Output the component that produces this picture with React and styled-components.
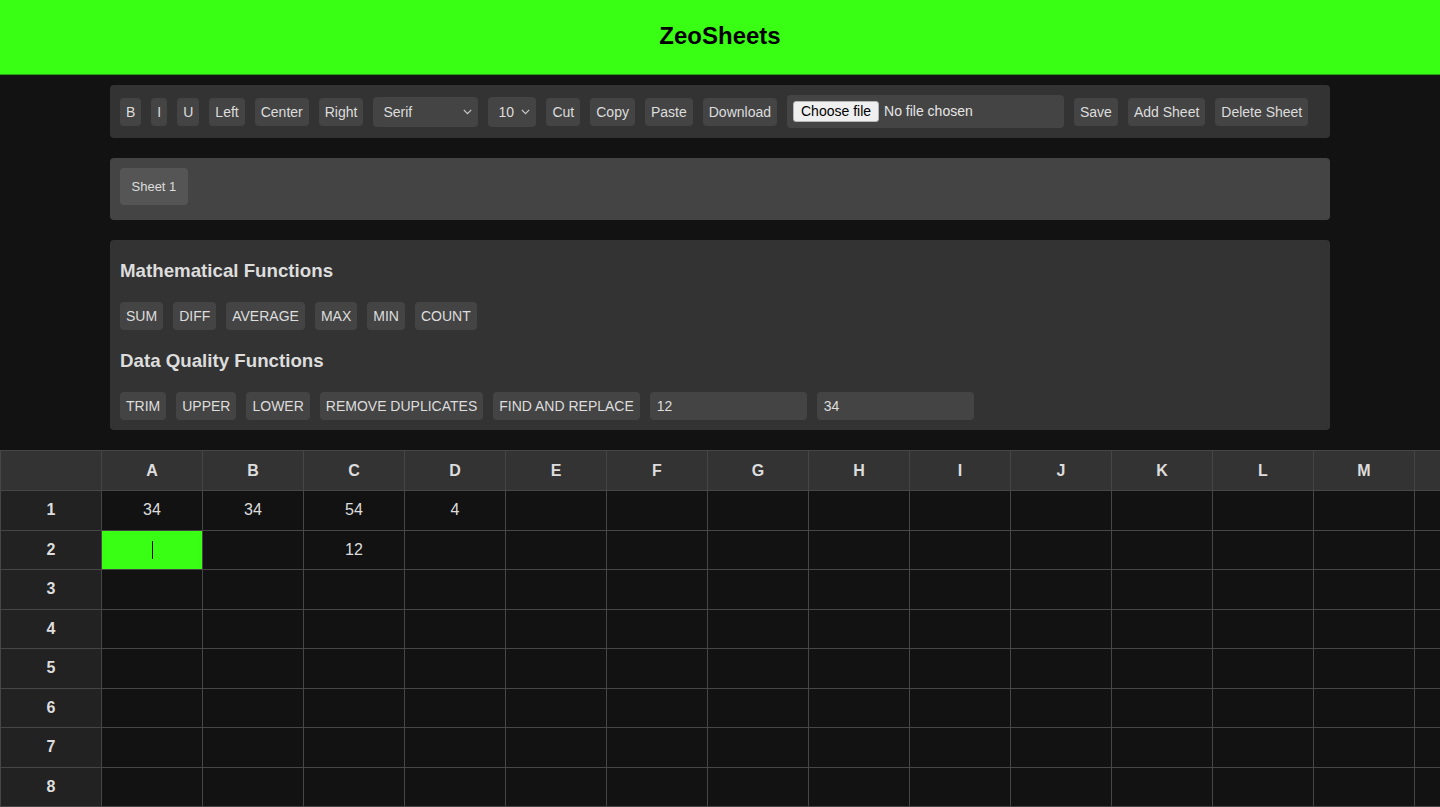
import React from 'react';
import styled, { createGlobalStyle } from 'styled-components';

const NEON = '#39ff14';
const FONT = '"Liberation Sans", Arial, Helvetica, sans-serif';

const GlobalStyle = createGlobalStyle`
  html, body {
    margin: 0;
    padding: 0;
    background: #121212;
    scrollbar-width: none;
  }
  body {
    font-family: ${FONT};
    color: #ddd;
    overflow-x: hidden;
  }
  ::-webkit-scrollbar { display: none; width: 0; height: 0; }
`;

/* header */
const Header = styled.header`
  height: 75px;
  padding-bottom: 3px;
  box-sizing: border-box;
  background: ${NEON};
  border-bottom: 1px solid #2ea317;
  display: flex;
  align-items: center;
  justify-content: center;
`;
const Title = styled.h1`
  margin: 0;
  font-size: 24px;
  font-weight: 700;
  color: #000;
`;

const Main = styled.main`
  width: 1220px;
  margin: 10px auto 20px;
  display: flex;
  flex-direction: column;
  gap: 20px;
`;

/* toolbar */
const Toolbar = styled.div`
  display: flex;
  align-items: center;
  gap: 10px;
  padding: 10px;
  background: #333;
  border-radius: 4px;
`;
const Btn = styled.button`
  font: 14px/16px ${FONT};
  color: #ddd;
  background: #444;
  border: none;
  border-radius: 4px;
  padding: 6px;
  white-space: nowrap;
  cursor: pointer;
`;
const SelectWrap = styled.div`
  position: relative;
  width: ${p => p.$w}px;
  height: 30px;
`;
const Select = styled.select`
  appearance: none;
  width: 100%;
  height: 100%;
  padding: 0 16px 0 10px;
  font: 14px ${FONT};
  color: #ddd;
  background: #444;
  border: none;
  border-radius: 4px;
  outline: none;
`;
const Chevron = styled.svg`
  position: absolute;
  right: 6px;
  top: 12px;
  pointer-events: none;
`;
const FileBox = styled.label`
  display: flex;
  align-items: center;
  gap: 5px;
  width: 277px;
  height: 33px;
  box-sizing: border-box;
  padding: 0 6px;
  background: #444;
  border-radius: 4px;
  font: 14px/15px ${FONT};
  color: #e6e6e6;
  input { display: none; }
`;
const ChooseBtn = styled.span`
  color: #000;
  background: #efefef;
  border: 1px solid #b5b5b5;
  border-radius: 3px;
  padding: 2px 7px;
`;

/* sheet tabs */
const TabBar = styled.div`
  display: flex;
  gap: 10px;
  padding: 10px 10px 15px;
  background: #444;
  border-radius: 4px;
`;
const Tab = styled.button`
  font: 13px/15px ${FONT};
  color: #ddd;
  background: #555;
  border: none;
  border-radius: 4px;
  padding: 11px 11.5px;
`;

/* functions */
const FnPanel = styled.section`
  padding: 10px;
  background: #333;
  border-radius: 4px;
`;
const FnTitle = styled.h3`
  margin: 20px 0;
  font-size: 18.72px;
  font-weight: 700;
  color: #ddd;
  &:first-child { margin-top: 10px; }
`;
const FnRow = styled.div`
  display: flex;
  align-items: center;
  gap: 10px;
`;
const FnInput = styled.input`
  width: 157px;
  height: 28px;
  box-sizing: border-box;
  padding: 0 7px;
  font: 14px ${FONT};
  color: #ddd;
  background: #444;
  border: none;
  border-radius: 4px;
  outline: none;
`;

/* grid */
const GridWrap = styled.div`
  overflow: hidden;
`;
const Grid = styled.div`
  display: grid;
  grid-template-columns: repeat(${p => p.$cols}, 100px);
  grid-template-rows: 39px;
  grid-auto-rows: 38.5px;
  gap: 1px;
  padding: 1px;
  width: max-content;
  background: #464646;
`;
const Cell = styled.div`
  display: flex;
  align-items: center;
  justify-content: center;
  font-size: 16px;
  font-weight: ${p => (p.$kind === 'head' || p.$kind === 'row' ? 700 : 400)};
  color: #ddd;
  background: ${p =>
    p.$kind === 'head' ? '#333' :
    p.$kind === 'row' ? '#222' :
    p.$active ? NEON : '#121212'};
`;
const Caret = styled.span`
  width: 1px;
  height: 18px;
  background: #000;
`;

const COLS = 'ABCDEFGHIJKLMN'.split('');
const ROWS = 8;
const data = { A1: '34', B1: '34', C1: '54', D1: '4', C2: '12' };

const ChevronIcon = () => (
  <Chevron width="9" height="6" viewBox="0 0 9 6">
    <polyline points="0.8,0.8 4.5,4.6 8.2,0.8" fill="none" stroke="#cfcfcf" strokeWidth="1.1" />
  </Chevron>
);

const App = () => (
  <>
    <GlobalStyle />
    <Header>
      <Title>ZeoSheets</Title>
    </Header>
    <Main>
      <Toolbar>
        <Btn>B</Btn>
        <Btn>I</Btn>
        <Btn>U</Btn>
        <Btn>Left</Btn>
        <Btn>Center</Btn>
        <Btn>Right</Btn>
        <SelectWrap $w={105}>
          <Select defaultValue="Serif">
            <option>Serif</option>
            <option>Sans-serif</option>
            <option>Monospace</option>
          </Select>
          <ChevronIcon />
        </SelectWrap>
        <SelectWrap $w={48}>
          <Select defaultValue="10">
            <option>10</option>
            <option>12</option>
            <option>14</option>
          </Select>
          <ChevronIcon />
        </SelectWrap>
        <Btn>Cut</Btn>
        <Btn>Copy</Btn>
        <Btn>Paste</Btn>
        <Btn>Download</Btn>
        <FileBox>
          <input type="file" />
          <ChooseBtn>Choose file</ChooseBtn>
          No file chosen
        </FileBox>
        <Btn>Save</Btn>
        <Btn>Add Sheet</Btn>
        <Btn>Delete Sheet</Btn>
      </Toolbar>

      <TabBar>
        <Tab>Sheet 1</Tab>
      </TabBar>

      <FnPanel>
        <FnTitle>Mathematical Functions</FnTitle>
        <FnRow>
          {['SUM', 'DIFF', 'AVERAGE', 'MAX', 'MIN', 'COUNT'].map(f => (
            <Btn key={f}>{f}</Btn>
          ))}
        </FnRow>
        <FnTitle>Data Quality Functions</FnTitle>
        <FnRow>
          {['TRIM', 'UPPER', 'LOWER', 'REMOVE DUPLICATES', 'FIND AND REPLACE'].map(f => (
            <Btn key={f}>{f}</Btn>
          ))}
          <FnInput defaultValue="12" />
          <FnInput defaultValue="34" />
        </FnRow>
      </FnPanel>
    </Main>

    <GridWrap>
      <Grid $cols={COLS.length + 1}>
        <Cell $kind="head" />
        {COLS.map(c => (
          <Cell key={c} $kind="head">{c}</Cell>
        ))}
        {Array.from({ length: ROWS }, (_, i) => i + 1).map(r => (
          <React.Fragment key={r}>
            <Cell $kind="row">{r}</Cell>
            {COLS.map(c => {
              const id = c + r;
              const active = id === 'A2';
              return (
                <Cell key={id} $active={active}>
                  {active ? <Caret /> : data[id]}
                </Cell>
              );
            })}
          </React.Fragment>
        ))}
      </Grid>
    </GridWrap>
  </>
);

export default App;
